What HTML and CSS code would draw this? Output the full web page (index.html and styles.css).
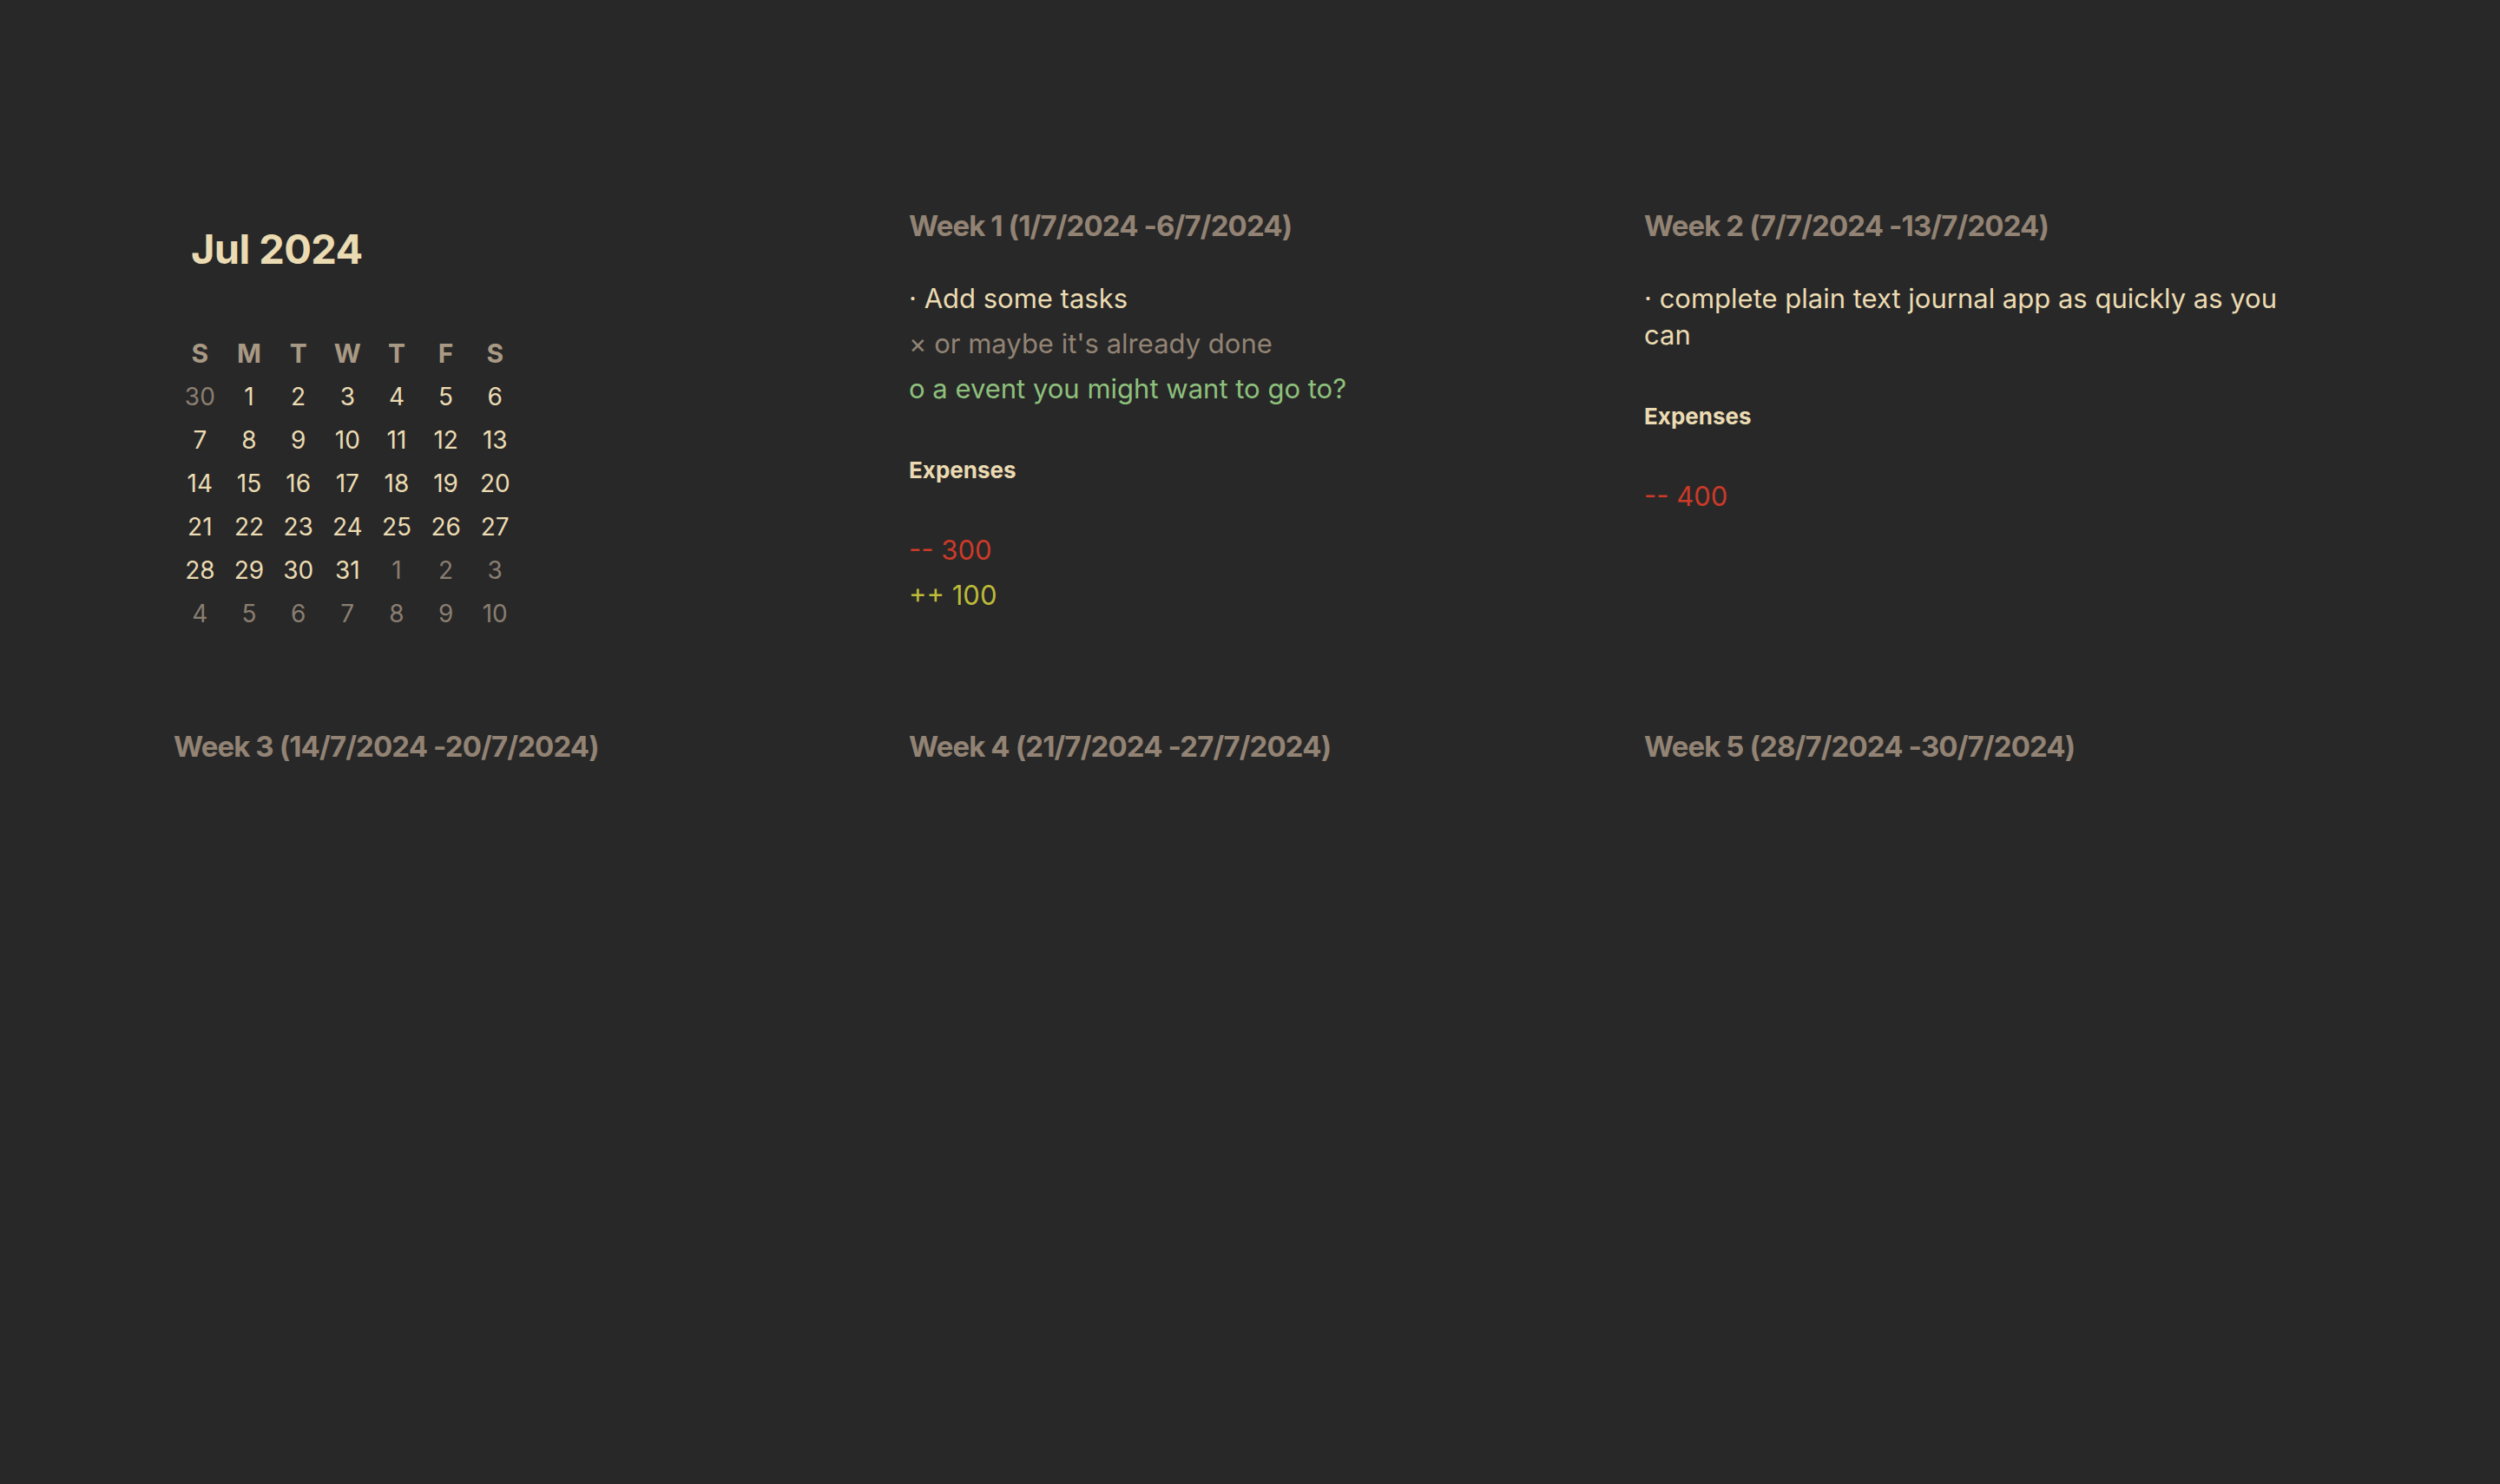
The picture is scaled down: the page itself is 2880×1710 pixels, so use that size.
FILE: index.html
```html
<!DOCTYPE html>
<html lang="en">
<head>
<meta charset="utf-8">
<title>Jul 2024</title>
<link rel="stylesheet" href="styles.css">
</head>
<body>
<main class="page">
  <div class="grid">
    <section class="calendar">
      <h1 class="cal-title">Jul 2024</h1>
      <div class="cal-grid">
        <span class="wd">S</span><span class="wd">M</span><span class="wd">T</span><span class="wd">W</span><span class="wd">T</span><span class="wd">F</span><span class="wd">S</span>
        <span class="day muted">30</span><span class="day">1</span><span class="day">2</span><span class="day">3</span><span class="day">4</span><span class="day">5</span><span class="day">6</span>
        <span class="day">7</span><span class="day">8</span><span class="day">9</span><span class="day">10</span><span class="day">11</span><span class="day">12</span><span class="day">13</span>
        <span class="day">14</span><span class="day">15</span><span class="day">16</span><span class="day">17</span><span class="day">18</span><span class="day">19</span><span class="day">20</span>
        <span class="day">21</span><span class="day">22</span><span class="day">23</span><span class="day">24</span><span class="day">25</span><span class="day">26</span><span class="day">27</span>
        <span class="day">28</span><span class="day">29</span><span class="day">30</span><span class="day">31</span><span class="day muted">1</span><span class="day muted">2</span><span class="day muted">3</span>
        <span class="day muted">4</span><span class="day muted">5</span><span class="day muted">6</span><span class="day muted">7</span><span class="day muted">8</span><span class="day muted">9</span><span class="day muted">10</span>
      </div>
    </section>

    <section class="week">
      <h2 class="week-title">Week 1 (1/7/2024 -6/7/2024)</h2>
      <ul class="entries">
        <li class="entry task">· Add some tasks</li>
        <li class="entry done">× or maybe it's already done</li>
        <li class="entry event">o a event you might want to go to?</li>
      </ul>
      <h3 class="exp-title">Expenses</h3>
      <ul class="entries">
        <li class="entry minus">-- 300</li>
        <li class="entry plus">++ 100</li>
      </ul>
    </section>

    <section class="week">
      <h2 class="week-title">Week 2 (7/7/2024 -13/7/2024)</h2>
      <ul class="entries">
        <li class="entry task">· complete plain text journal app as quickly as you can</li>
      </ul>
      <h3 class="exp-title">Expenses</h3>
      <ul class="entries">
        <li class="entry minus">-- 400</li>
      </ul>
    </section>

    <section class="week">
      <h2 class="week-title">Week 3 (14/7/2024 -20/7/2024)</h2>
    </section>
    <section class="week">
      <h2 class="week-title">Week 4 (21/7/2024 -27/7/2024)</h2>
    </section>
    <section class="week">
      <h2 class="week-title">Week 5 (28/7/2024 -30/7/2024)</h2>
    </section>
  </div>
</main>
</body>
</html>
```

FILE: styles.css
```css
html, body {
  margin: 0;
  padding: 0;
  background: #282828;
}

body {
  font-family: Inter, "Noto Sans", sans-serif;
  color: #ebdbb2;
  min-height: 1710px;
}

.page {
  padding: 240px 0 0 200px;
}

.grid {
  display: grid;
  grid-template-columns: repeat(3, 770px);
  column-gap: 77px;
  row-gap: 108px;
  align-items: start;
}

/* Calendar */
.calendar {
  padding-top: 18px;
}

.cal-title {
  margin: 0 0 66px 20px;
  font-size: 47px;
  line-height: 58px;
  font-weight: 700;
  letter-spacing: -0.6px;
  color: #ebdbb2;
}

.cal-grid {
  display: grid;
  grid-template-columns: repeat(7, 56.67px);
  grid-auto-rows: 50px;
  margin-left: 2px;
  text-align: center;
}

.wd {
  font-size: 30px;
  line-height: 50px;
  font-weight: 700;
  color: #a89984;
}

.day {
  font-size: 28px;
  line-height: 50px;
  color: #ebdbb2;
}

.day.muted {
  color: #8a7e71;
}

/* Week columns */
.week {
  display: flex;
  flex-direction: column;
}

.week-title {
  margin: 0;
  font-size: 33px;
  line-height: 40px;
  font-weight: 700;
  letter-spacing: -0.9px;
  color: #928374;
  white-space: nowrap;
}

.entries {
  list-style: none;
  margin: 0;
  padding: 0;
  display: flex;
  flex-direction: column;
  gap: 10px;
  max-width: 760px;
}

.week-title + .entries {
  margin-top: 43px;
}

.entry {
  font-size: 31px;
  line-height: 42px;
}

.task { color: #ebdbb2; }
.done { color: #928374; }
.event { color: #8ec07c; }
.minus { color: #cc3a28; }
.plus { color: #bdbb38; }

.exp-title {
  margin: 57px 0 55px;
  font-size: 26px;
  line-height: 32px;
  font-weight: 700;
  color: #ebdbb2;
}
```
